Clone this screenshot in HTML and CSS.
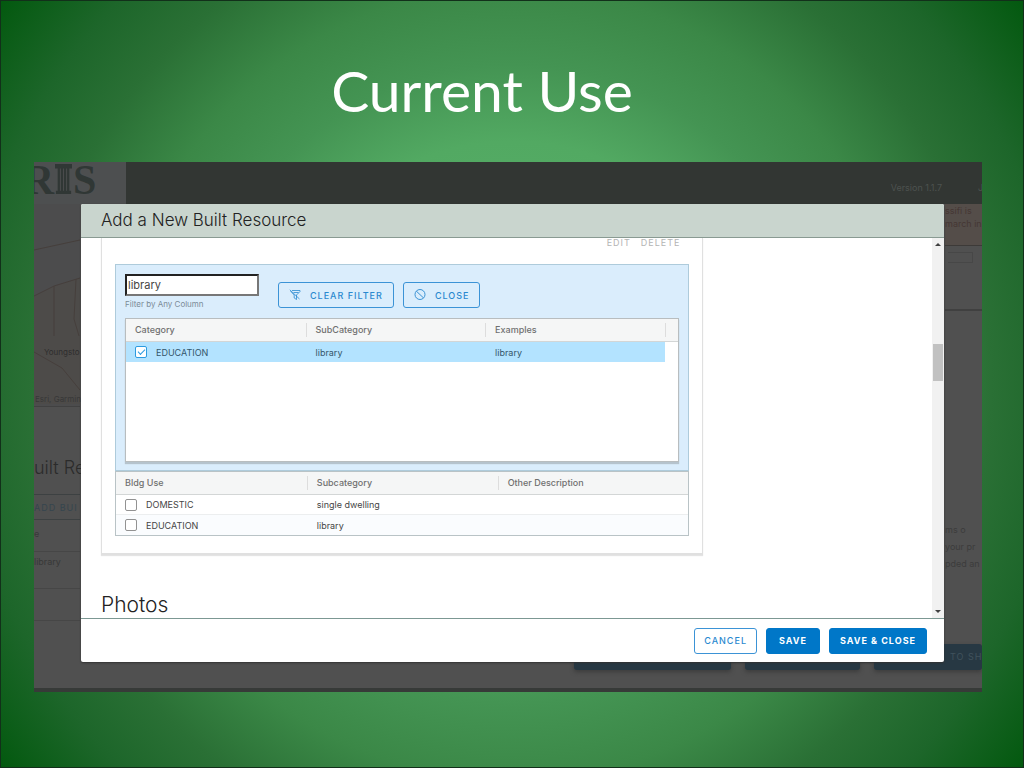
FILE: index.html
```html
<!DOCTYPE html>
<html lang="en">
<head>
<meta charset="utf-8">
<title>Current Use</title>
<link rel="stylesheet" href="styles.css">
</head>
<body>
<main class="slide">
  <h1 class="slide-title">Current Use</h1>
  <section class="stage">
    <div class="app">
      <header class="app-header">
        <div class="app-logo"><span>R</span><svg width="17" height="31" viewBox="0 0 19 28" preserveAspectRatio="none" aria-hidden="true"><path d="M0 1H19V5H16V25H18V28H1V25H3V5H0Z" fill="#303735"/><path d="M6 5V25M9.500 5V25M13 5V25" stroke="#4d4f50"/></svg><span>S</span></div>
        <div class="app-version">Version 1.1.7</div>
        <div class="app-user">J</div>
      </header>
      <div class="app-main">
        <aside class="app-left">
          <div class="map">
            <svg class="map-lines" viewBox="0 0 46 200" preserveAspectRatio="none" aria-hidden="true">
              <path d="M0 92L20 82L46 74V200H0Z" fill="#50493f" opacity=".25"/>
              <path d="M0 46L46 36M0 92L20 82L46 74M20 82V132M42 75L40 115L45 132M0 148L28 164L46 186" fill="none" stroke="#463f3c" stroke-width="1"/>
            </svg>
            <span class="map-city">Youngsto</span>
            <span class="map-credit">Esri, Garmin</span>
          </div>
          <h2 class="app-heading">uilt Re</h2>
          <div class="app-add">ADD BUI</div>
          <div class="app-cell">e</div>
          <div class="app-cell tall">library</div>
          <div class="app-cell"></div>
        </aside>
        <aside class="app-right">
          <div class="notice"><p>ssifi is</p><p>march in</p></div>
          <div class="pager"><span class="pager-box"></span></div>
          <div class="app-note"><p>ms o</p><p>your pr</p><p>pded an</p></div>
        </aside>
      </div>
      <div class="app-actions">
        <span class="app-btn first"></span>
        <span class="app-btn second"></span>
        <span class="app-btn third">TO SH</span>
      </div>
      <div class="app-footer"></div>
    </div>

    <div class="modal" role="dialog" aria-labelledby="modal-title">
      <header class="modal-header"><h2 id="modal-title">Add a New Built Resource</h2></header>
      <div class="modal-body">
        <div class="content">
          <section class="card">
            <div class="card-actions">
              <button type="button" class="link-btn" disabled>EDIT</button>
              <button type="button" class="link-btn" disabled>DELETE</button>
            </div>
            <div class="picker">
              <div class="filter-row">
                <div class="field">
                  <input id="filter" type="text" value="library">
                  <label for="filter">Filter by Any Column</label>
                </div>
                <div class="filter-buttons">
                  <button type="button" class="btn icon-btn">
                    <svg width="12" height="12" viewBox="0 0 12 12" aria-hidden="true"><path d="M3 1.500H11V2.500L7.500 6V10.500L5.200 9V6L1.500 2.200M.8.8L10.500 10M4.500 3.500H9.500" fill="none" stroke="currentColor" stroke-width=".8"/></svg>
                    CLEAR FILTER</button>
                  <button type="button" class="btn icon-btn">
                    <svg width="12" height="12" viewBox="0 0 12 12" aria-hidden="true"><circle cx="6" cy="5.500" r="5" fill="none" stroke="currentColor" stroke-width=".9"/><path d="M2.500 2.300L9.400 8.800" stroke="currentColor" stroke-width=".9"/></svg>
                    CLOSE</button>
                </div>
              </div>
              <div class="grid-box">
                <table class="grid options">
                  <colgroup><col class="opt"><col class="opt"><col class="opt"><col></colgroup>
                  <thead><tr><th><div>Category</div></th><th><div>SubCategory</div></th><th><div>Examples</div></th><th><div></div></th></tr></thead>
                  <tbody><tr class="selected"><td><label><input type="checkbox" checked>EDUCATION</label></td><td>library</td><td>library</td><td></td></tr></tbody>
                </table>
              </div>
            </div>
            <table class="grid uses">
              <thead><tr><th><div>Bldg Use</div></th><th><div>Subcategory</div></th><th><div>Other Description</div></th></tr></thead>
              <tbody>
                <tr><td><label><input type="checkbox">DOMESTIC</label></td><td>single dwelling</td><td></td></tr>
                <tr><td><label><input type="checkbox">EDUCATION</label></td><td>library</td><td></td></tr>
              </tbody>
            </table>
          </section>
          <h3 class="section-title">Photos</h3>
        </div>
        <div class="scrollbar" aria-hidden="true">
          <svg width="6" height="3" viewBox="0 0 6 3"><path d="M0 3L3 0L6 3Z" fill="#404040"/></svg>
          <div class="track"><div class="thumb"></div></div>
          <svg width="6" height="3" viewBox="0 0 6 3"><path d="M0 0L3 3L6 0Z" fill="#404040"/></svg>
        </div>
      </div>
      <footer class="modal-footer">
        <button type="button" class="btn">CANCEL</button>
        <button type="button" class="btn primary save">SAVE</button>
        <button type="button" class="btn primary">SAVE &amp; CLOSE</button>
      </footer>
    </div>
  </section>
</main>
</body>
</html>
```
FILE: styles.css
```css
* { box-sizing: border-box; }
body { margin: 0; font-family: Inter, "Liberation Sans", sans-serif; color: #454545; }
h1, h2, h3, p { margin: 0; }
button, input { font-family: inherit; }

.slide {
  min-height: 100vh;
  display: flex;
  flex-direction: column;
  padding: 53px 41px 75px 33px;
  border: 1px solid #12301a;
  background: radial-gradient(circle at 50% 50%, #5bb570 0%, #52a962 38%, #449453 50%, #3b8847 62%, #2a7035 75%, #1d662a 86%, #03590f 100%);
}
.slide-title {
  font: 400 57px/72px Lato, sans-serif;
  color: #fff;
  text-align: center;
  padding-right: 52px;
  margin-bottom: 36px;
}
.stage { position: relative; flex: 1; display: flex; min-height: 528px; }

/* Dimmed application behind the dialog */
.app { flex: 1; min-width: 0; display: flex; flex-direction: column; background: #505050; overflow: hidden; color: #383838; font-size: 10px; }
.app-header { height: 42px; display: flex; align-items: center; background: #323633; color: #4d524f; font-size: 9px; }
.app-logo { display: flex; align-items: flex-start; width: 92px; height: 42px; background: #4d4f50; color: #303735; font: 700 42px/36px "Liberation Serif", serif; }
.app-logo svg { margin: 1px 1px 0; }
.app-logo span:first-child { width: 20px; display: flex; justify-content: flex-end; }
.app-version { margin-left: auto; padding: 8px 36px 0 0; }
.app-user { width: 4px; overflow: hidden; padding-top: 8px; }
.app-main { flex: 1; display: flex; justify-content: space-between; }
.app-left { width: 46px; white-space: nowrap; }
.map { position: relative; height: 203px; background: #4c4c4d; border-bottom: 1px solid #414141; font-size: 8px; }
.map-lines { width: 100%; height: 200px; display: block; }
.map-city { position: absolute; left: 10px; top: 143px; color: #2d2d2d; }
.map-credit { position: absolute; left: 1px; bottom: 2px; }
.app-heading { font-weight: 300; font-size: 18px; line-height: 28px; margin: 47px 0 12px; color: #2b2b2b; }
.app-add { height: 26px; line-height: 26px; border: solid #3d4142; border-width: 1px 0; color: #35454e; font-size: 9px; letter-spacing: 1px; }
.app-cell { height: 32px; line-height: 28px; border-bottom: 1px solid #464646; font-size: 9px; }
.app-cell.tall { height: 37px; line-height: 20px; }
.app-right { width: 37px; white-space: nowrap; color: #3c3c3c; }
.notice { height: 42px; background: #544d49; border-bottom: 1px solid #3d3a38; line-height: 13px; font-size: 9px; color: #453734; }
.pager { height: 65px; padding: 6px 0 0 3px; border-bottom: 2px solid #404040; }
.pager-box { display: block; width: 25px; height: 11px; border: 1px solid #474747; border-left: 0; }
.app-note { margin-top: 210px; font-size: 9px; line-height: 17px; }
.app-actions { display: flex; justify-content: flex-end; gap: 14px; height: 44px; }
.app-btn { height: 26px; background: #273843; border-radius: 3px; box-shadow: 0 2px 4px #3c3c3c; }
.first { width: 157px; }
.second { width: 115px; }
.third { width: 108px; padding-left: 76px; line-height: 26px; font-size: 9px; letter-spacing: 1px; color: #40525c; white-space: nowrap; }
.app-footer { height: 4px; background: #373a38; }

/* Dialog */
.modal {
  position: absolute;
  inset: 42px 38px 30px 47px;
  display: flex;
  flex-direction: column;
  background: #fff;
  border-radius: 2px;
  box-shadow: 0 1px 2px #333;
  overflow: hidden;
}
.modal-header { padding: 0 20px; background: #c9d5ce; border-bottom: 1px solid #899a92; }
.modal-header h2 { font-weight: 300; font-size: 17px; line-height: 33px; color: #222; }
.modal-body { flex: 1; min-height: 0; display: flex; border-bottom: 1px solid #7c9893; }
.content { flex: 1; padding-left: 20px; }
.card { width: 72.5%; padding: 0 13px 17px; border: solid #e0e0e0; border-width: 0 1px 2px; box-shadow: 0 1px 1px #e4e4e4; }
.card-actions { display: flex; justify-content: flex-end; gap: 10px; height: 26px; padding: 1px 9px 0 0; }
.link-btn { height: 7px; padding: 0; border: 0; background: none; color: #b4b4b4; font-size: 9px; line-height: 7px; letter-spacing: 1px; }
.picker { padding: 9px 9px 8px; border: 1px solid #aecbdb; background: #daedfc; }
.filter-row { display: flex; gap: 19px; height: 44px; }
.field { width: 134px; }
.field input { display: block; width: 100%; height: 22px; padding: 0 1px; border: 2px solid #222; border-right-color: #777; border-bottom-color: #777; border-radius: 0; background: #fff; color: #454545; font-size: 11px; outline: 0; }
.field label { display: block; font-size: 8px; line-height: 16px; color: #7b8b97; }
.filter-buttons { display: flex; gap: 9px; padding-top: 8px; }
.btn { height: 26px; padding: 0 9px; border: 1px solid #3b93d6; border-radius: 3px; background: transparent; color: #2a89cf; font-size: 9px; font-weight: 500; letter-spacing: 1px; white-space: nowrap; }
.icon-btn { display: flex; align-items: center; gap: 9px; padding: 0 10px; }
.btn.primary { padding: 0 10px; background: #0077c8; border-color: #0077c8; color: #fff; font-weight: 700; }
.btn.save { padding: 0 12px; }
.grid-box { height: 144px; background: #fff; border: 1px solid #b8bdbf; box-shadow: 0 2px 1px #b5c3cd; }

.grid { width: 100%; table-layout: fixed; border-collapse: separate; border-spacing: 0; font-size: 9px; }
.grid th { height: 23px; padding: 0; background: #f5f6f6; border-bottom: 1px solid #d3d6d6; text-align: left; font-weight: 500; color: #707070; }
.grid th div { height: 14px; line-height: 14px; padding-left: 9px; border-left: 1px solid #ddd; }
.grid th:first-child div { border-left: 0; }
.grid td { height: 20px; padding: 0 0 0 9px; }
.grid td + td { padding-left: 10px; }
.grid label { display: flex; align-items: center; gap: 9px; }
.opt { width: 32.5%; }
.selected td { background: #b3e3ff; color: #33566b; }
.selected td:last-child { background: #fff; }
.uses { border: 1px solid #b9c3c6; }
.uses td { border-bottom: 1px solid #eceeef; }
.uses tbody tr:last-child td { border: 0; background: #fafcfe; }
.grid input { appearance: none; width: 12px; height: 12px; margin: 0; border: 1px solid #929292; border-radius: 2px; background: #fff; }
.grid input:checked { border-color: #2d9be0; position: relative; }
.grid input:checked::after { content: ""; position: absolute; left: 2px; top: 2px; width: 6px; height: 3px; border: solid #2d9be0; border-width: 0 0 1px 1px; transform: rotate(-45deg); }
.section-title { margin-top: 36px; font-weight: 300; font-size: 21px; line-height: 28px; color: #222; }

.scrollbar { width: 12px; display: flex; flex-direction: column; align-items: center; padding: 5px 0; background: #f1f1f1; }
.track { flex: 1; align-self: stretch; padding: 0 1px; display: flex; flex-direction: column; }
.track::before { content: ""; flex: 27; }
.track::after { content: ""; flex: 63; }
.thumb { flex: 10; background: #c1c1c1; }
.modal-footer { display: flex; justify-content: flex-end; align-items: center; gap: 9px; height: 43px; padding-right: 17px; }
```
